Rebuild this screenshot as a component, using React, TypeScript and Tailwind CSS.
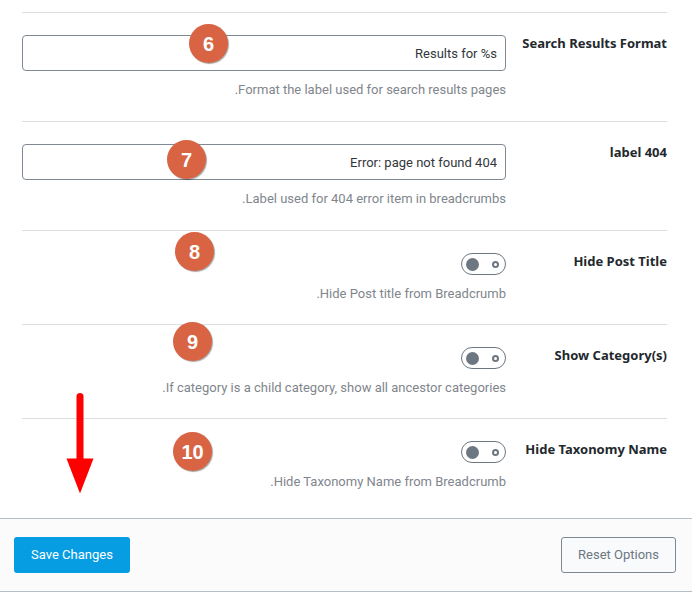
import { useId } from "react";

type TextSetting = { kind: "text"; label: string; value: string; help: string };
type SwitchSetting = { kind: "switch"; label: string; help: string };
type Setting = TextSetting | SwitchSetting;

const settings: Setting[] = [
  {
    kind: "text",
    label: "Search Results Format",
    value: "Results for %s",
    help: "Format the label used for search results pages.",
  },
  {
    kind: "text",
    label: "404 label",
    value: "404 Error: page not found",
    help: "Label used for 404 error item in breadcrumbs.",
  },
  { kind: "switch", label: "Hide Post Title", help: "Hide Post title from Breadcrumb." },
  {
    kind: "switch",
    label: "Show Category(s)",
    help: "If category is a child category, show all ancestor categories.",
  },
  { kind: "switch", label: "Hide Taxonomy Name", help: "Hide Taxonomy Name from Breadcrumb." },
];

function Switch({ id, helpId }: { id: string; helpId: string }) {
  return (
    <span
      dir="ltr"
      className="relative flex h-[22px] w-[45px] items-center justify-between rounded-full border border-[#6c7781] bg-white pr-[6px] pl-[4px] has-checked:flex-row-reverse"
    >
      <span className="size-[13px] rounded-full bg-[#6c7781]" />
      <span className="size-[7px] rounded-full border-2 border-[#6c7781]" />
      <input
        id={id}
        type="checkbox"
        aria-describedby={helpId}
        className="absolute inset-0 cursor-pointer opacity-0"
      />
    </span>
  );
}

function SettingRow({ setting }: { setting: Setting }) {
  const id = useId();
  const helpId = id + "-help";
  return (
    <div className="flex border-t border-[#dadfe4] pt-[22px]">
      <div className="w-[161px] shrink-0">
        <label htmlFor={id} className="block font-['Noto_Sans',sans-serif] text-[13px] leading-4 font-bold text-[#23282d]">
          {setting.label}
        </label>
      </div>
      <div className={setting.kind === "text" ? "min-w-0 flex-1 space-y-[9px] pb-[21px]" : "min-w-0 flex-1 space-y-[9px] pb-5"}>
        {setting.kind === "text" ? (
          <input
            id={id}
            type="text"
            defaultValue={setting.value}
            aria-describedby={helpId}
            className="block h-9 w-full rounded-[4px] border border-[#7e8993] bg-white px-2 text-[13px] text-[#32373c]"
          />
        ) : (
          <Switch id={id} helpId={helpId} />
        )}
        <p id={helpId} className="text-[13px] leading-5 text-[#7f868d]">
          {setting.help}
        </p>
      </div>
    </div>
  );
}

const markers = [
  { n: 6, place: "left-[189px] top-[24px]" },
  { n: 7, place: "left-[167px] top-[140px]" },
  { n: 8, place: "left-[175px] top-[232px]" },
  { n: 9, place: "left-[173px] top-[322px]" },
  { n: 10, place: "left-[173px] top-[432px]" },
];

export default function App() {
  return (
    <div dir="rtl" className="relative bg-white font-[Roboto,'Noto_Sans',sans-serif]">
      <form onSubmit={(e) => e.preventDefault()}>
        <div className="pt-3 pr-[25px] pb-[6px] pl-[22px]">
          {settings.map((s) => (
            <SettingRow key={s.label} setting={s} />
          ))}
        </div>
        <footer className="flex items-center justify-between border-y border-[#b5bfc9] bg-[#fbfbfc] py-[18px] pr-4 pl-[14px]">
          <button
            type="reset"
            className="h-9 w-[115px] rounded-[3px] border border-[#7e8993] bg-[#f8fafc] text-[13px] text-[#6c7781]"
          >
            Reset Options
          </button>
          <button type="submit" className="h-9 w-[116px] rounded-[3px] bg-[#069de3] text-[13px] text-white">
            Save Changes
          </button>
        </footer>
      </form>

      {markers.map((m) => (
        <span
          key={m.n}
          className={
            "absolute flex size-[39px] items-center justify-center rounded-full bg-[#d96444] font-['Liberation_Sans',sans-serif] text-[20px] leading-none font-bold text-white shadow-[1px_1px_1px_rgba(0,0,0,0.35)] " +
            m.place
          }
        >
          {m.n}
        </span>
      ))}
      <svg className="absolute top-[392px] left-[66px] h-[102px] w-7" viewBox="0 0 28 102" aria-hidden="true">
        <path d="M14 4.500V70" stroke="#ff0000" strokeWidth="7" strokeLinecap="round" />
        <path d="M0.500 66.500H27.500L14 101.500Z" fill="#ff0000" />
      </svg>
    </div>
  );
}
